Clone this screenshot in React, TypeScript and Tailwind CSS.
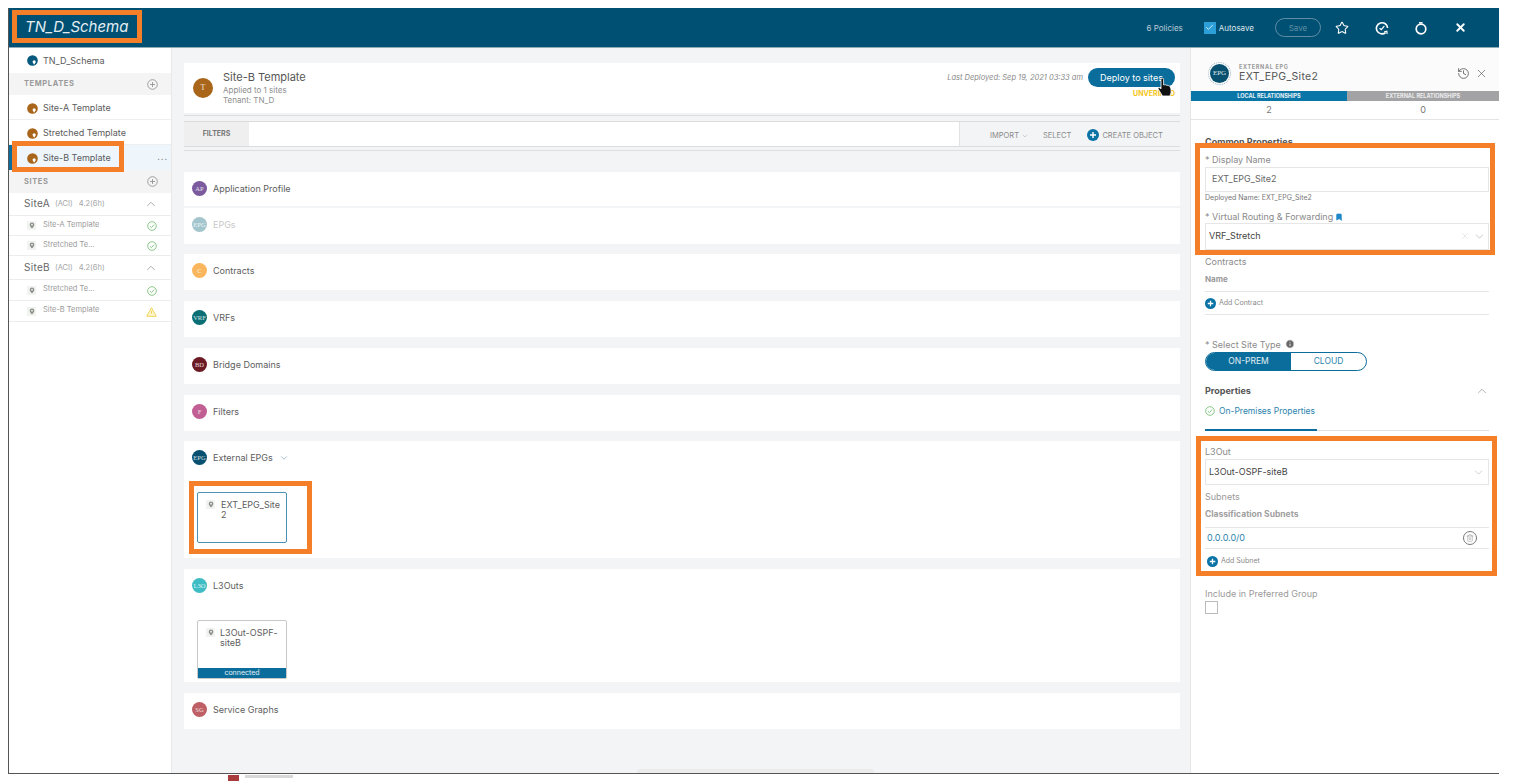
import { ReactNode } from 'react';
import { ChevronDown, ChevronUp, History, Info, Star, X, Check, Trash2, Bookmark } from 'lucide-react';

const font = "font-['Inter','Liberation_Sans',sans-serif]";

function PinIcon({ color, size = 11 }: { color: string; size?: number }) {
  return (
    <svg width={size} height={size} viewBox="0 0 12 12" className="shrink-0">
      <circle cx="6" cy="6" r="5.8" fill={color} />
      <circle cx="7.800" cy="7.300" r="1.700" fill="#fff" />
      <path d="M7.800 10.600 L6.400 8.200 H9.200 Z" fill="#fff" />
    </svg>
  );
}

function SmallPin() {
  return (
    <span className="flex h-[9px] w-[9px] shrink-0 items-center justify-center bg-[#f0f3ef]">
      <svg width="6" height="7" viewBox="0 0 6 7">
        <path d="M3 0.500a2.300 2.300 0 0 1 2.300 2.300C5.300 4.200 3 6.500 3 6.500S0.700 4.200 0.700 2.800A2.300 2.300 0 0 1 3 0.500Z" fill="#8a8f88" />
        <circle cx="3" cy="2.700" r="0.900" fill="#f0f3ef" />
      </svg>
    </span>
  );
}

function PlusCircle({ size = 12 }: { size?: number }) {
  return (
    <svg width={size} height={size} viewBox="0 0 12 12" className="shrink-0">
      <circle cx="6" cy="6" r="6" fill="#0a73a5" />
      <path d="M6 3v6M3 6h6" stroke="#fff" strokeWidth="1.400" />
    </svg>
  );
}

function OutlinePlus() {
  return (
    <svg width="11" height="11" viewBox="0 0 11 11" className="shrink-0">
      <circle cx="5.500" cy="5.500" r="4.800" fill="none" stroke="#8c8c8c" strokeWidth="0.800" />
      <path d="M5.500 3v5M3 5.500h5" stroke="#8c8c8c" strokeWidth="0.800" />
    </svg>
  );
}

function StatusOk() {
  return (
    <svg width="10" height="10" viewBox="0 0 10 10" className="shrink-0">
      <circle cx="5" cy="5" r="4.300" fill="none" stroke="#7cc27a" strokeWidth="0.900" />
      <path d="M3 5.200l1.500 1.400 2.600-3" fill="none" stroke="#7cc27a" strokeWidth="0.900" />
    </svg>
  );
}

function StatusWarn() {
  return (
    <svg width="11" height="10" viewBox="0 0 11 10" className="shrink-0">
      <path d="M5.500 0.800 L10.300 9.300 H0.700 Z" fill="#fdf6d0" stroke="#f2cf4a" strokeWidth="0.900" />
      <path d="M5.500 3.800v3" stroke="#f2cf4a" strokeWidth="0.900" />
    </svg>
  );
}

// header: deployment status dial with the little arrow at the bottom right
function DialIcon() {
  return (
    <svg width="14" height="14" viewBox="0 0 14 14" className="ml-[26px] shrink-0" fill="none" stroke="#fff" strokeWidth="1.600">
      <path d="M10.600 11.600A5.600 5.600 0 1 1 12.600 7" />
      <path d="M4.500 7.200l1.800 1.500 3-3.500" strokeWidth="1.300" />
      <path d="M9.200 10.800l2.600-0.600 0.300 2.800" strokeWidth="1.200" />
    </svg>
  );
}

// header: reload ring with a tab on top
function RingIcon() {
  return (
    <svg width="14" height="14" viewBox="0 0 14 14" className="ml-[25px] shrink-0" fill="none" stroke="#fff" strokeWidth="1.700">
      <circle cx="7" cy="8" r="4.800" />
      <path d="M5 1.800h3.600" strokeWidth="1.500" />
    </svg>
  );
}

function HandCursor() {
  return (
    <svg width="17" height="19" viewBox="0 0 17 19" className="pointer-events-none absolute left-[1157px] top-[78px]">
      <path
        d="M4 1.500a1.300 1.300 0 0 1 2.600 0V7l1-0.200c.8-.2 1.300 0 1.600.5.700-.3 1.500-.2 1.800.4.800-.3 1.700 0 2 .8l1 2.500v3.500l-1 3.500H5.500L1.200 11c-.6-1 .6-2 1.600-1.200L4 10.800Z"
        fill="#111"
        stroke="#fff"
        strokeWidth="0.800"
      />
    </svg>
  );
}

function SectionHead({ label }: { label: string }) {
  return (
    <div className="flex h-full items-center justify-between bg-[#f4f4f4] pl-[15px] pr-[13px]">
      <span className="text-[7.500px] font-bold tracking-[0.08em] text-[#9a9a9a]">{label}</span>
      <OutlinePlus />
    </div>
  );
}

function TemplateRow({ label, selected }: { label: string; selected?: boolean }) {
  return (
    <div
      className={
        selected
          ? 'flex h-[25px] items-center border-l-[3px] border-[#0a6d9c] bg-[#eef6fb] pl-[15px] pr-[3px] pt-[1px]'
          : 'flex h-[25px] items-center border-b border-[#efefef] pl-[18px] pr-[5px] pt-[2px]'
      }
    >
      <PinIcon color="#a9661a" />
      <span className="ml-[5px] text-[9px] text-[#5b5b5b]">{label}</span>
      {selected && <span className="mb-[3px] ml-auto text-[9px] leading-none tracking-[1px] text-[#8c8c8c]">...</span>}
    </div>
  );
}

function SiteHead({ name, h }: { name: string; h: string }) {
  return (
    <div className={`flex items-center border-b border-[#ececec] pl-[15px] pr-[13px] ${h}`}>
      <span className="mb-[1px] text-[10px] tracking-[0.03em] text-[#666]">{name}</span>
      <span className="ml-[5px] text-[7.500px] text-[#a5a5a5]">(ACI)</span>
      <span className="ml-[6px] text-[7.500px] text-[#a5a5a5]">4.2(6h)</span>
      <ChevronUp className="ml-auto text-[#777]" size={14} strokeWidth={1} />
    </div>
  );
}

function SiteItem({ label, warn, h }: { label: string; warn?: boolean; h: string }) {
  return (
    <div className={`flex items-center border-b border-[#ececec] pl-[18px] pr-[14px] ${h}`}>
      <SmallPin />
      <span className="mb-[2px] ml-[7px] text-[7.500px] text-[#9a9a9a]">{label}</span>
      <span className="ml-auto mt-[1px]">{warn ? <StatusWarn /> : <StatusOk />}</span>
    </div>
  );
}

function Badge({ text, color, fade }: { text: string; color: string; fade?: boolean }) {
  return (
    <span
      className={`flex h-[15px] w-[15px] shrink-0 items-center justify-center overflow-hidden rounded-full font-['Liberation_Serif',serif] text-[6.500px] text-white/80 ${fade ? 'opacity-40' : ''}`}
      style={{ backgroundColor: color }}
    >
      {text}
    </span>
  );
}

function Section({
  text,
  color,
  label,
  h,
  mb,
  fade,
  children,
}: {
  text: string;
  color: string;
  label: string;
  h: string;
  mb: string;
  fade?: boolean;
  children?: ReactNode;
}) {
  return (
    <div className={`bg-white ${h} ${mb}`}>
      <div className="flex h-[33px] items-center pl-[8px]">
        <Badge text={text} color={color} fade={fade} />
        <span className={`ml-[6px] text-[9px] ${fade ? 'text-[#c9c9c9]' : 'text-[#5d5d5d]'}`}>{label}</span>
        {label === 'External EPGs' && <ChevronDown className="ml-[6px] text-[#3d7f9e]" size={10} strokeWidth={1.200} />}
      </div>
      {children}
    </div>
  );
}

function Field({ children, h, mb }: { children: ReactNode; h: string; mb?: string }) {
  return <div className={`flex items-center ${h} ${mb ?? ''}`}>{children}</div>;
}

function Highlight({ className }: { className: string }) {
  return <div className={`pointer-events-none absolute border-[5px] border-[#f57f28] ${className}`} />;
}

export default function App() {
  return (
    <div className={`relative h-[781px] w-[1514px] overflow-hidden bg-white pl-[8px] pt-[8px] ${font}`}>
      <div className="flex h-[766px] w-[1491px] flex-col border-b border-l border-[#555]">
        <header className="flex h-[40px] shrink-0 items-center border-b border-[#8fa9b7] bg-[#005073] pl-[16px] pr-[32px] text-white">
          <span className="text-[15px] italic text-[#e6eef2]">TN_D_Schema</span>
          <span className="ml-auto text-[8px] text-[#b9cbd5]">6 Policies</span>
          <span className="ml-[21px] flex h-[12px] w-[12px] items-center justify-center bg-[#2d9fd8]">
            <Check size={9} strokeWidth={2} className="text-white" />
          </span>
          <span className="ml-[3px] text-[8px] text-[#dfe9ee]">Autosave</span>
          <span className="ml-[21px] flex h-[19px] w-[46px] items-center justify-center rounded-full border border-[#5f8ea6] text-[8px] text-[#5f8ea6]">
            Save
          </span>
          <Star className="ml-[14px]" size={14} strokeWidth={1.800} />
          <DialIcon />
          <RingIcon />
          <X className="ml-[26px]" size={13} strokeWidth={3.500} />
        </header>

        <div className="flex min-h-0 flex-1">
          <aside className="w-[163px] shrink-0 border-r border-[#e9e9e9] bg-white">
            <div className="flex h-[25px] items-center pl-[18px]">
              <PinIcon color="#07597d" />
              <span className="ml-[5px] text-[9px] text-[#5b5b5b]">TN_D_Schema</span>
            </div>
            <div className="h-[22px]">
              <SectionHead label="TEMPLATES" />
            </div>
            <TemplateRow label="Site-A Template" />
            <TemplateRow label="Stretched Template" />
            <TemplateRow label="Site-B Template" selected />
            <div className="h-[23px]">
              <SectionHead label="SITES" />
            </div>
            <SiteHead name="SiteA" h="h-[23px]" />
            <SiteItem label="Site-A Template" h="h-[20px]" />
            <SiteItem label="Stretched Te..." h="h-[20px]" />
            <SiteHead name="SiteB" h="h-[24px]" />
            <SiteItem label="Stretched Te..." h="h-[21px]" />
            <SiteItem label="Site-B Template" h="h-[21px]" warn />
          </aside>

          <main className="w-[1018px] shrink-0 bg-[#f3f4f6] pl-[12px] pr-[10px] pt-[15px]">
            <div className="flex h-[50px] items-center justify-between bg-white pl-[9px] pr-[5px]">
              <div className="flex items-center">
                <span className="flex h-[20px] w-[20px] items-center justify-center rounded-full bg-[#a9661a] font-['Liberation_Serif',serif] text-[8px] text-white/80">
                  T
                </span>
                <div className="ml-[10px] flex flex-col">
                  <span className="text-[11px] leading-[13px] text-[#555]">Site-B Template</span>
                  <span className="mt-[1px] text-[8px] leading-[10px] text-[#8e8e8e]">Applied to 1 sites</span>
                  <span className="text-[8px] leading-[10px] text-[#8e8e8e]">Tenant: TN_D</span>
                </div>
              </div>
              <div className="flex flex-col items-end self-start pt-[5px]">
                <div className="flex items-center">
                  <span className="mr-[5px] text-[7.500px] italic text-[#8a8a8a]">Last Deployed: Sep 19, 2021 03:33 am</span>
                  <span className="flex h-[19px] w-[87px] items-center justify-center rounded-full bg-[#0a6d9c] text-[9px] text-white">
                    Deploy to sites
                  </span>
                </div>
                <span className="mt-[2px] text-[7px] font-bold text-[#f5c518]">UNVERIFIED</span>
              </div>
            </div>
            <div className="mt-[2px] border-t border-[#dedede]" />

            <div className="mt-[5px] flex h-[26px] items-center border-y border-[#dcdcdc] pr-[14px]">
              <span className="flex h-full w-[65px] items-center justify-center bg-[#efefef] text-[7px] font-bold text-[#777]">FILTERS</span>
              <div className="h-full w-[711px] border-r border-[#e2e2e2] bg-white" />
              <span className="ml-[30px] mt-[3px] text-[7.500px] text-[#8a8a8a]">IMPORT</span>
              <ChevronDown className="ml-[2px] mt-[3px] text-[#8a8a8a]" size={8} strokeWidth={1} />
              <span className="ml-[14px] mt-[3px] text-[7.500px] text-[#8a8a8a]">SELECT</span>
              <span className="ml-[16px] mt-[2px]">
                <PlusCircle />
              </span>
              <span className="ml-[3px] mt-[3px] text-[7.500px] text-[#8a8a8a]">CREATE OBJECT</span>
            </div>
            <div className="mt-[3px] border-t border-[#dedede]" />

            <div className="mt-[21px]">
              <Section text="AP" color="#7b5a9e" label="Application Profile" h="h-[34px]" mb="mb-[2px]" />
              <Section text="EPG" color="#1c6f83" label="EPGs" h="h-[36px]" mb="mb-[10px]" fade />
              <Section text="C" color="#f9b65c" label="Contracts" h="h-[36px]" mb="mb-[11px]" />
              <Section text="VRF" color="#0a6f75" label="VRFs" h="h-[36px]" mb="mb-[11px]" />
              <Section text="BD" color="#6b1a24" label="Bridge Domains" h="h-[36px]" mb="mb-[11px]" />
              <Section text="F" color="#c15e93" label="Filters" h="h-[36px]" mb="mb-[10px]" />
              <Section text="EPG" color="#07506f" label="External EPGs" h="h-[117px]" mb="mb-[11px]">
                <div className="ml-[13px] mt-[18px] flex h-[51px] w-[90px] items-start rounded-[2px] border border-[#4c90b3] pl-[8px] pt-[7px]">
                  <SmallPin />
                  <span className="ml-[6px] w-[62px] break-all text-[9px] leading-[10px] text-[#5d5d5d]">EXT_EPG_Site2</span>
                </div>
              </Section>
              <Section text="L3O" color="#3fbcc4" label="L3Outs" h="h-[113px]" mb="mb-[11px]">
                <div className="ml-[13px] mt-[18px] flex h-[59px] w-[90px] flex-col rounded-[2px] border border-[#c8c8c8]">
                  <div className="flex flex-1 items-start pl-[8px] pt-[7px]">
                    <SmallPin />
                    <span className="ml-[5px] text-[9px] leading-[10px] text-[#5d5d5d]">L3Out-OSPF-siteB</span>
                  </div>
                  <span className="flex h-[10px] items-center justify-center bg-[#0a6d9c] text-[7px] text-white/90">connected</span>
                </div>
              </Section>
              <Section text="SG" color="#bd5f64" label="Service Graphs" h="h-[36px]" mb="mb-0" />
            </div>
          </main>

          <aside className="w-[309px] shrink-0 border-l border-[#e6e6e6] bg-white">
            <div className="flex h-[43px] items-center bg-[#fbfbfb] pl-[17px] pr-[11px] pt-[7px]">
              <span className="flex h-[23px] w-[23px] items-center justify-center rounded-full border border-dotted border-[#9fb9c6]">
                <span className="flex h-[19px] w-[19px] items-center justify-center rounded-full bg-[#07506f] font-['Liberation_Serif',serif] text-[7px] text-white/85">
                  EPG
                </span>
              </span>
              <div className="ml-[8px] flex flex-col">
                <span className="text-[5.500px] font-bold leading-[7px] tracking-[0.12em] text-[#9a9a9a]">EXTERNAL EPG</span>
                <span className="text-[10.500px] leading-[12px] tracking-[0.03em] text-[#555]">EXT_EPG_Site2</span>
              </div>
              <History className="ml-auto text-[#555]" size={13} strokeWidth={1.500} />
              <X className="ml-[5px] text-[#555]" size={13} strokeWidth={1.200} />
            </div>
            <div className="flex h-[10px]">
              <span className="flex w-[156px] items-center justify-center bg-[#0a76a8] text-[5.500px] font-bold text-white/90">LOCAL RELATIONSHIPS</span>
              <span className="flex flex-1 items-center justify-center bg-[#a3a3a5] text-[5.500px] font-bold text-white/80">EXTERNAL RELATIONSHIPS</span>
            </div>
            <div className="flex h-[19px] border-b border-[#e4e4e4] text-[9px] text-[#777]">
              <span className="flex w-[156px] items-center justify-center">2</span>
              <span className="flex flex-1 items-center justify-center">0</span>
            </div>

            <div className="pl-[14px] pr-[10px]">
              <Field h="h-[23px]" mb="mt-[10px]">
                <span className="text-[9px] font-bold text-[#555]">Common Properties</span>
              </Field>
              <Field h="h-[13px]">
                <span className="text-[9px] text-[#8a8a8a]">* Display Name</span>
              </Field>
              <div className="mt-[1px] flex h-[25px] items-center border border-[#e6e6e6] pb-[1px] pl-[6px] text-[9px] text-[#666]">EXT_EPG_Site2</div>
              <Field h="h-[12px]">
                <span className="text-[7px] text-[#777]">Deployed Name: EXT_EPG_Site2</span>
              </Field>
              <Field h="h-[13px]" mb="mt-[6px]">
                <span className="text-[9px] text-[#8a8a8a]">* Virtual Routing &amp; Forwarding</span>
                <Bookmark className="ml-[2px] fill-[#1e88c9] text-[#1e88c9]" size={8} />
              </Field>
              <div className="flex h-[27px] items-center border border-[#e6e6e6] pb-[1px] pl-[3px] pr-[2px] text-[9px] text-[#444]">
                VRF_Stretch
                <X className="ml-auto text-[#c9c9c9]" size={10} strokeWidth={1} />
                <ChevronDown className="ml-[3px] text-[#999]" size={13} strokeWidth={1} />
              </div>
              <Field h="h-[12px]" mb="mt-[6px]">
                <span className="text-[9px] text-[#8a8a8a]">Contracts</span>
              </Field>
              <Field h="h-[23px]">
                <span className="mb-[1px] text-[8px] font-bold text-[#9a9a9a]">Name</span>
              </Field>
              <div className="flex h-[23px] items-center border-t border-[#e6e6e6]">
                <PlusCircle size={11} />
                <span className="ml-[3px] text-[7px] text-[#8a8a8a]">Add Contract</span>
              </div>
              <div className="border-t border-[#e6e6e6]" />
              <Field h="h-[14px]" mb="mt-[22px]">
                <span className="mt-[1px] text-[9px] text-[#8a8a8a]">* Select Site Type</span>
                <Info className="ml-[4px] fill-[#666] text-white" size={10} />
              </Field>
              <div className="mt-[1px] flex h-[19px] w-[162px] overflow-hidden rounded-full border border-[#0a6d9c] text-[8.500px]">
                <span className="flex w-[85px] items-center justify-center bg-[#0a6d9c] text-white/90">ON-PREM</span>
                <span className="flex flex-1 items-center justify-center text-[#2c84ad]">CLOUD</span>
              </div>
              <Field h="h-[14px]" mb="mt-[13px]">
                <span className="text-[9px] font-bold text-[#555]">Properties</span>
                <ChevronUp className="ml-auto text-[#777]" size={14} strokeWidth={1} />
              </Field>
              <Field h="h-[14px]" mb="mt-[6px]">
                <StatusOk />
                <span className="ml-[4px] text-[8.500px] text-[#2c84ad]">On-Premises Properties</span>
              </Field>
              <div className="mt-[11px] h-[2px] border-b border-[#e0e0e0]">
                <div className="h-[2px] w-[112px] bg-[#0a6d9c]" />
              </div>
              <Field h="h-[13px]" mb="mt-[14px]">
                <span className="text-[9px] text-[#8a8a8a]">L3Out</span>
              </Field>
              <div className="mt-[1px] flex h-[26px] items-center border border-[#e6e6e6] pl-[3px] pr-[3px] text-[9px] text-[#444]">
                L3Out-OSPF-siteB
                <ChevronDown className="ml-auto text-[#aaa]" size={13} strokeWidth={1} />
              </div>
              <Field h="h-[12px]" mb="mt-[6px]">
                <span className="text-[9px] text-[#9a9a9a]">Subnets</span>
              </Field>
              <Field h="h-[12px]" mb="mt-[5px]">
                <span className="text-[8.500px] font-bold text-[#a0a0a0]">Classification Subnets</span>
              </Field>
              <div className="mt-[7px] flex h-[22px] items-center border-y border-[#e6e6e6] pl-[2px] pr-[12px]">
                <span className="text-[9px] text-[#2c84ad]">0.0.0.0/0</span>
                <span className="ml-auto flex h-[14px] w-[14px] items-center justify-center rounded-full border border-[#777]">
                  <Trash2 className="text-[#777]" size={8} strokeWidth={1.200} />
                </span>
              </div>
              <div className="flex h-[24px] items-center pl-[2px]">
                <PlusCircle size={11} />
                <span className="ml-[3px] text-[7px] text-[#8a8a8a]">Add Subnet</span>
              </div>
              <Field h="h-[12px]" mb="mt-[15px]">
                <span className="text-[9px] text-[#9a9a9a]">Include in Preferred Group</span>
              </Field>
              <div className="mt-[1px] h-[13px] w-[13px] border border-[#bbb]" />
            </div>
          </aside>
        </div>
      </div>

      <HandCursor />
      {/* scrollbar stub and the bit of the page peeking out under the window */}
      <div className="absolute left-[637px] top-[769px] h-[4px] w-[237px] rounded-t-[3px] bg-[#ebebeb]" />
      <div className="absolute left-[228px] top-[775px] h-[6px] w-[11px] bg-[#a83b3b]" />
      <div className="absolute left-[245px] top-[775px] h-[3px] w-[48px] bg-[#d8d8d8]" />

      <Highlight className="left-[12px] top-[10px] h-[33px] w-[130px]" />
      <Highlight className="left-[12px] top-[141px] h-[31px] w-[112px]" />
      <Highlight className="left-[189px] top-[481px] h-[73px] w-[123px]" />
      <Highlight className="left-[1195px] top-[143px] h-[112px] w-[300px]" />
      <Highlight className="left-[1196px] top-[436px] h-[140px] w-[301px]" />
    </div>
  );
}
